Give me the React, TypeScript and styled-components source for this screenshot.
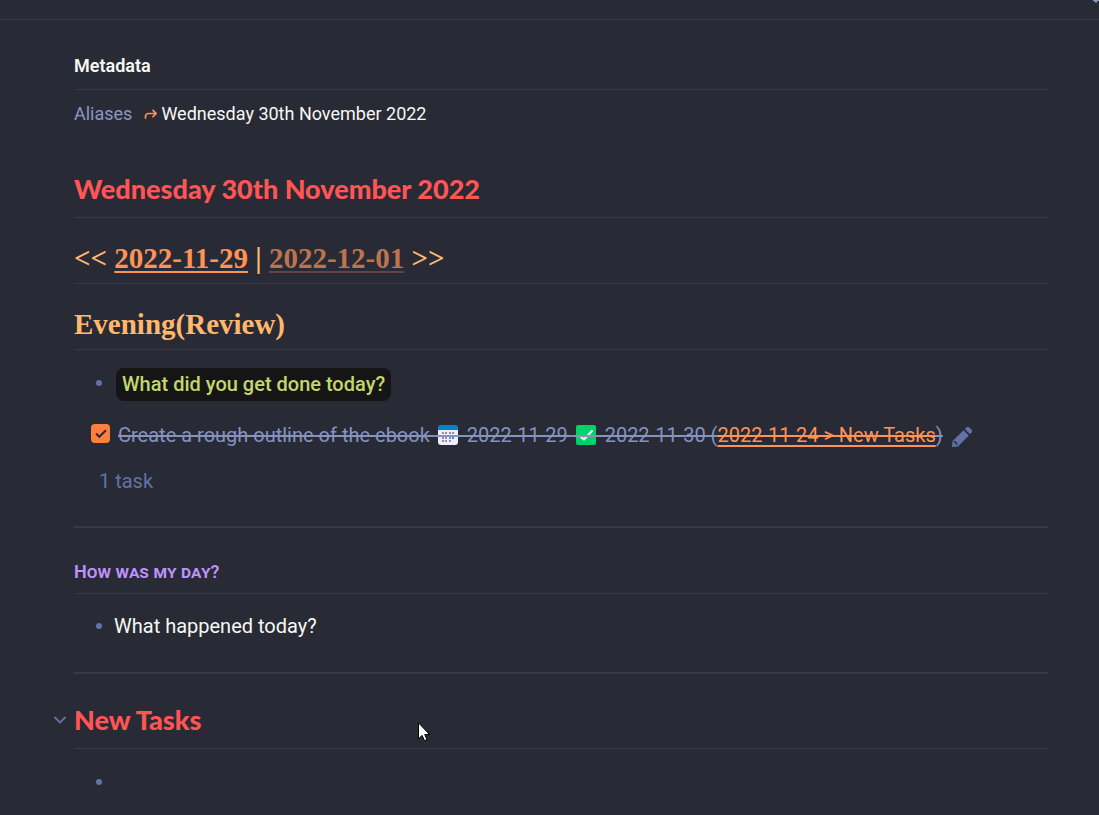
import React from "react";
import styled, { createGlobalStyle } from "styled-components";

const GlobalStyle = createGlobalStyle`
  *, *::before, *::after { box-sizing: border-box; }
  body {
    margin: 0;
    background: #282a36;
    color: #f8f8f2;
    font-family: Roboto, "Liberation Sans", sans-serif;
    font-size: 20px;
    line-height: 30px;
  }
`;

const Page = styled.div`
  position: relative;
  min-height: 100vh;
  overflow: hidden;
`;

const TopBar = styled.header`
  display: flex;
  justify-content: flex-end;
  height: 20px;
  border-bottom: 1px solid #373844;
`;

const TopMarker = styled.svg`
  flex: none;
  width: 6px;
  height: 4px;
`;

const Note = styled.main`
  display: flex;
  flex-direction: column;
  padding: 34px 51px 16px 74px;
`;

const MetaTitle = styled.h2`
  margin: 0;
  padding-bottom: 11px;
  border-bottom: 1px solid #373844;
  font-size: 18px;
  line-height: 24px;
  font-weight: 600;
`;

const MetaRow = styled.div`
  display: flex;
  align-items: center;
  margin-top: 12px;
  font-size: 18px;
  line-height: 24px;
`;

const MetaKey = styled.span`
  color: #8b98c4;
  margin-right: 12px;
`;

const AliasIcon = styled.svg`
  width: 14px;
  height: 12px;
  margin-right: 3px;
`;

const Title = styled.h1<{ $gap: number }>`
  position: relative;
  margin: ${(p) => p.$gap}px 0 0;
  padding-bottom: 12px;
  border-bottom: 1px solid #373a4c;
  color: #ff5555;
  font-family: "Lato Black", Lato, sans-serif;
  font-size: 27px;
  line-height: 32px;
  font-weight: 900;
`;

const Section = styled.h2`
  margin: 24px 0 0;
  padding-bottom: 9px;
  border-bottom: 1px solid #373844;
  color: #ffb86c;
  font-family: "Liberation Serif", serif;
  font-size: 29px;
  line-height: 32px;
  font-weight: 700;
`;

const DayLink = styled.a<{ $faded?: boolean }>`
  color: ${(p) => (p.$faded ? "#bd744e" : "#ff9255")};
  text-decoration: underline 2px ${(p) => (p.$faded ? "#63443f" : "#ff9255")};
  text-underline-offset: 3px;
`;

const SmallHeading = styled.h3`
  margin: 32px 0 0;
  padding-bottom: 9px;
  border-bottom: 1px solid #373844;
  color: #bd93f9;
  font-size: 18px;
  line-height: 24px;
  font-weight: 600;
  font-variant: small-caps;
`;

const List = styled.ul<{ $gap: number }>`
  list-style: none;
  margin: ${(p) => p.$gap}px 0 0;
  padding: 0 0 0 22px;
`;

const Item = styled.li`
  display: flex;
  align-items: flex-start;
  min-height: 30px;

  &::before {
    content: "";
    flex: none;
    width: 6px;
    height: 6px;
    margin: 12px 12px 0 0;
    border-radius: 50%;
    background: #6272a4;
  }
`;

const Highlight = styled.strong`
  margin-left: 2px;
  padding: 1px 6px 2px;
  border-radius: 8px;
  background: #151515;
  color: #c3d66f;
  font-weight: 500;
`;

const TaskRow = styled.div`
  display: flex;
  align-items: flex-start;
  margin: 19px 0 0 17px;
`;

const Check = styled.span`
  display: grid;
  margin: 4px 8px 0 0;

  > * { grid-area: 1 / 1; }
  svg { pointer-events: none; }
`;

const CheckBox = styled.input`
  appearance: none;
  width: 19px;
  height: 19px;
  margin: 0;
  border-radius: 4px;
  background: #ff7f3f;
`;

const TaskText = styled.label`
  color: #8593be;
  text-decoration: line-through 2px;
  white-space: nowrap;
`;

const TaskLink = styled.a`
  color: #ff9255;
  text-decoration: underline 2px;
  text-underline-offset: 3px;

  > span { text-decoration: line-through 2px; }
`;

const Emoji = styled.svg`
  width: 27px;
  height: 22px;
  vertical-align: -4px;
`;

const IconButton = styled.button`
  display: flex;
  margin: 6px 0 0 8px;
  padding: 0;
  border: 0;
  background: none;
`;

const TaskCount = styled.p`
  margin: 16px 0 0 25px;
  color: #6272a4;
`;

const Divider = styled.hr<{ $gap: number }>`
  width: 100%;
  height: 2px;
  margin: ${(p) => p.$gap}px 0 0;
  border: 0;
  background: #373a4c;
`;

const FoldButton = styled.button`
  position: absolute;
  left: -20px;
  top: 12px;
  display: flex;
  padding: 0;
  border: 0;
  background: none;
`;

const Pointer = styled.svg`
  position: absolute;
  left: 418px;
  top: 722px;
  width: 12px;
  height: 20px;
`;

const Calendar = () => (
  <Emoji viewBox="-2 0 27 22" aria-label="due">
    <path d="M1 6h20v12a3 3 0 0 1-3 3H4a3 3 0 0 1-3-3z" fill="#f1ecf8" />
    <path d="M1 6V4a3 3 0 0 1 3-3h14a3 3 0 0 1 3 3v2z" fill="#0084ce" />
    <path
      d="M5 8h2v2H5zM8 8h2v2H8zM12 8h2v2h-2zM15 8h2v2h-2zM5 13h2v2H5zM8 13h2v2H8zM12 13h2v2h-2zM5 16h2v2H5zM8 16h2v2H8zM12 16h2v2h-2z"
      fill="#998ea4"
    />
    <path d="M15 13h2v2h-2z" fill="#00a6ed" />
    <path d="M-2 11h27v2H-2z" fill="#8593be" />
  </Emoji>
);

const Done = () => (
  <Emoji viewBox="-2 0 27 22" aria-label="done">
    <rect x="1" y="1" width="20" height="20" rx="2" fill="#00d26a" />
    <path d="M5 12l4 3.5L17 7" fill="none" stroke="#f4f4f4" strokeWidth="2.2" strokeLinecap="round" strokeLinejoin="round" />
    <path d="M-2 11h27v2H-2z" fill="#8593be" />
  </Emoji>
);

export default function App() {
  return (
    <Page>
      <GlobalStyle />
      <TopBar>
        <TopMarker viewBox="0 0 6 4" aria-hidden="true">
          <path d="M0 0h6v1H5L3 3 1 1H0z" fill="#8b98b8" />
        </TopMarker>
      </TopBar>
      <Note>
        <MetaTitle>Metadata</MetaTitle>
        <MetaRow>
          <MetaKey>Aliases</MetaKey>
          <AliasIcon viewBox="0 0 14 12" fill="none" stroke="#ff9255" strokeWidth="1.7" strokeLinecap="round" strokeLinejoin="round" aria-hidden="true">
            <path d="M1.5 10V8.5a3 3 0 0 1 3-3H12M9 2.3l3.2 3.2L9 8.7" />
          </AliasIcon>
          <span>Wednesday 30th November 2022</span>
        </MetaRow>

        <Title $gap={47}>Wednesday 30th November 2022</Title>
        <Section>
          &lt;&lt; <DayLink href="#2022-11-29">2022-11-29</DayLink> |{" "}
          <DayLink href="#2022-12-01" $faded>2022-12-01</DayLink> &gt;&gt;
        </Section>
        <Section>Evening(Review)</Section>
        <List $gap={18}>
          <Item>
            <Highlight>What did you get done today?</Highlight>
          </Item>
        </List>
        <TaskRow>
          <Check>
            <CheckBox id="task" type="checkbox" defaultChecked />
            <svg width="19" height="19" viewBox="0 0 19 19" fill="none" stroke="#282a36" strokeWidth="2" aria-hidden="true">
              <path d="M5 9.5l3.3 3.3L15 6.2" />
            </svg>
          </Check>
          <TaskText htmlFor="task">
            Create a rough outline of the ebook <Calendar /> 2022-11-29 <Done /> 2022-11-30 (
            <TaskLink href="#new-tasks"><span>2022-11-24 &gt; New Tasks</span></TaskLink>)
          </TaskText>
          <IconButton aria-label="Edit task">
            <svg width="22" height="22" viewBox="0 0 22 22" fill="#6272a4" aria-hidden="true">
              <path d="M12.6 4.2l5.2 5.2L7 20.4 1 21l.6-6zM13.8 3l1.8-1.6a2 2 0 0 1 2.7 0L20.6 3.700a2 2 0 0 1 0 2.700L19 8.200z" />
              <path d="M2.800 15.500l1.700.600.500 1.500 1.600.700" fill="none" stroke="#282a36" strokeWidth="1.4" />
            </svg>
          </IconButton>
        </TaskRow>
        <TaskCount>1 task</TaskCount>
        <Divider $gap={30} />

        <SmallHeading>How was my day?</SmallHeading>
        <List $gap={17}>
          <Item>What happened today?</Item>
        </List>
        <Divider $gap={31} />

        <Title $gap={30} id="new-tasks">
          <FoldButton aria-label="Fold section">
            <svg width="12" height="8" viewBox="0 0 12 8" fill="none" stroke="#6272a4" strokeWidth="1.8" strokeLinecap="round" strokeLinejoin="round" aria-hidden="true">
              <path d="M1 1.5l5 5 5-5" />
            </svg>
          </FoldButton>
          New Tasks
        </Title>
        <List $gap={18}>
          <Item />
        </List>
      </Note>
      <Pointer viewBox="0 0 12 20" aria-hidden="true">
        <path d="M.5.8v16l3.6-3.400 2.400 5.300 2.500-1.100-2.300-5.100h4.800z" fill="#fff" stroke="#000" strokeWidth="1" />
      </Pointer>
    </Page>
  );
}
